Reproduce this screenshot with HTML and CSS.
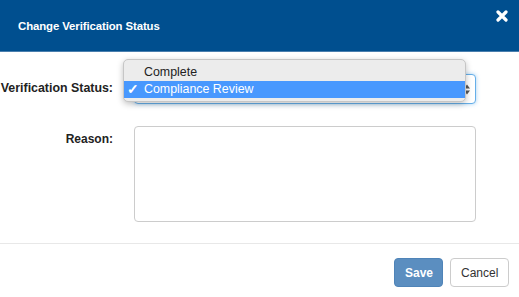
FILE: index.html
```html
<!DOCTYPE html><html lang="en">
<head>
  <meta charset="UTF-8">
  <title>Change Verification Status</title>
  <link rel="stylesheet" href="styles.css">
</head>
<body>
  <div class="modal">
    <div class="modal-header">
      <div class="modal-title">Change Verification Status</div>
      <button class="close-btn" aria-label="Close">
        <svg width="12" height="12" viewBox="0 0 12 12"><path d="M2 2 L10 10 M10 2 L2 10" stroke="#fff" stroke-width="3.2" stroke-linecap="round"/></svg>
      </button>
    </div>
    <div class="modal-body">
      <div class="form-row">
        <div class="label label-status"><span>Verification Status:</span></div>
        <div class="select-wrap">
          <div class="fake-select">
            <svg class="arrows" width="6" height="11" viewBox="0 0 6 11"><path d="M0 4.5 L3 0.5 L6 4.5 Z M0 6.5 L3 10.5 L6 6.5 Z" fill="#555"/></svg>
          </div>
          <div class="dropdown">
            <div class="option">Complete</div>
            <div class="option selected"><span class="check">✓</span>Compliance Review</div>
          </div>
        </div>
      </div>
      <div class="form-row">
        <div class="label label-reason"><span>Reason:</span></div>
        <textarea class="reason"></textarea>
      </div>
    </div>
    <div class="modal-footer">
      <button class="btn btn-save">Save</button>
      <button class="btn btn-cancel">Cancel</button>
    </div>
  </div>
</body>
</html>
```

FILE: styles.css
```css
* { box-sizing: border-box; }
html, body { margin: 0; background: #fff; font-family: 'Liberation Sans', Arial, sans-serif; }
.modal { width: 519px; height: 297px; display: flex; flex-direction: column; }
.modal-header { height: 52px; background: #004f8f; border-bottom: 1px solid #4a7fae; display: flex; align-items: center; padding: 0 11px 0 18px; }
.modal-title { flex: 1; color: #fff; font-size: 11.4px; font-weight: bold; letter-spacing: -0.1px; }
.close-btn { align-self: flex-start; margin-top: 10px; padding: 0; border: none; background: transparent; width: 12px; height: 12px; display: flex; }
.modal-body { padding: 22px 0 0 0; }
.form-row { display: grid; grid-template-columns: 113px 342px; column-gap: 21px; }
.form-row + .form-row { margin-top: 22px; }
.label { display: flex; justify-content: flex-end; overflow: hidden; white-space: nowrap; font-size: 12px; font-weight: bold; color: #222; }
.label-status { align-items: center; height: 30px; padding-bottom: 2px; font-size: 12.4px; }
.label-reason { padding-top: 6px; }
.select-wrap { position: relative; height: 30px; }
.fake-select { height: 30px; border: 1px solid #66afe9; border-radius: 4px; box-shadow: 0 0 4px rgba(102,175,233,0.6); background: #fff; display: flex; align-items: center; justify-content: flex-end; padding-right: 5px; }
.dropdown { position: absolute; left: -11px; top: -15px; width: 343px; padding: 4px 0 3px; background: #ececec; border: 1px solid #c6c6c6; border-radius: 5px; box-shadow: 0 2px 6px rgba(0,0,0,0.25); }
.option { height: 17px; line-height: 17px; padding-left: 20px; font-size: 12.4px; color: #222; position: relative; }
.option.selected { background: #4898fe; color: #fff; }
.check { position: absolute; left: 3px; top: 0; font-size: 14px; font-weight: bold; }
.reason { display: block; width: 342px; height: 96px; border: 1px solid #ccc; border-radius: 4px; resize: none; margin: 0; }
.modal-footer { margin-top: 21px; border-top: 1px solid #e8e8e8; padding: 14px 10px 0 0; display: flex; justify-content: flex-end; gap: 7px; }
.btn { height: 29px; padding: 0 10px; border-radius: 4px; font-family: 'Liberation Sans', Arial, sans-serif; font-size: 12px; }
.btn-save { width: 49px; background: #5b8ec0; border: 1px solid #4f84b8; color: #fff; font-weight: bold; }
.btn-cancel { width: 59px; background: #fff; border: 1px solid #ccc; color: #333; }
```
